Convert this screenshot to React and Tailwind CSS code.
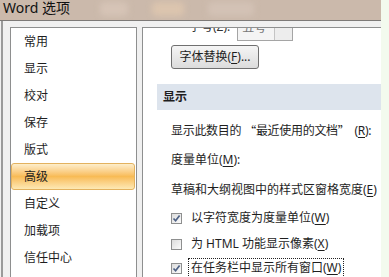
import React from 'react';

const font = { fontFamily: '"Noto Sans", "Noto Sans CJK SC", sans-serif' };
const cjk = { fontFamily: '"Noto Sans CJK SC", sans-serif' };

function Check({ checked }) {
  return (
    <span className="w-[11px] h-[11px] border border-[#8e8f8f] bg-gradient-to-br from-[#dcdcdc] to-[#fbfbfb] flex items-center justify-center shrink-0">
      {checked && (
        <svg width="9" height="9" viewBox="0 0 9 9">
          <path d="M1.5 4.5 L3.6 6.8 L7.6 1.6" fill="none" stroke="#4d6185" strokeWidth="1.7" />
        </svg>
      )}
    </span>
  );
}

function U({ children }) {
  return <span className="underline underline-offset-2">{children}</span>;
}

const navItems = ['常用', '显示', '校对', '保存', '版式', '高级', '自定义', '加载项', '信任中心'];

export default function App() {
  return (
    <div className="w-[389px] h-[277px] overflow-hidden bg-[#f3faee] flex text-[12px] text-[#1e1e1e]" style={font}>
      <div className="w-[381px] h-full flex flex-col">
        {/* title bar */}
        <div className="h-[20px] relative bg-[#cbb9ab] overflow-hidden shrink-0">
          <span className="absolute left-[100px] top-[2px] w-[28px] h-[14px] rounded bg-[#d6c4b6] blur-[3px]" />
          <span className="absolute left-[152px] top-[2px] w-[32px] h-[14px] rounded bg-[#dcc5ae] blur-[3px]" />
          <span className="absolute left-[208px] top-[2px] w-[46px] h-[14px] rounded bg-[#d3c2b5] blur-[3px]" />
          <span className="relative block pl-[3px] text-[14px] leading-[16px] text-[#111]">Word 选项</span>
        </div>

        {/* body */}
        <div className="flex-1 flex bg-[#f0f0f0] border-t border-[#7d7a78] pl-[1px]">
          <div className="flex-1 flex border-l-2 border-[#9a9a9a] pt-[6px] pl-[7px] pb-[4px] gap-[5px]">
            {/* left nav */}
            <div className="w-[127px] bg-white border border-[#8e8f8f] overflow-hidden">
              {navItems.map((item) =>
                item === '高级' ? (
                  <div
                    key={item}
                    className="h-[27px] mr-[1px] flex items-center pl-[12px] rounded-[3px] border border-[#e3b25f] bg-gradient-to-b from-[#fdeecb] via-[#f8bb55] to-[#fde9b4]"
                  >
                    {item}
                  </div>
                ) : (
                  <div key={item} className="h-[27px] flex items-center pl-[13px]">
                    {item}
                  </div>
                )
              )}
            </div>

            {/* right content */}
            <div className="flex-1 bg-white border border-[#8e8f8f] border-r-0 overflow-hidden flex flex-col">
              <div className="h-[20px] -mt-[7px] flex items-start shrink-0">
                <span className="ml-[46px] leading-[12px] text-[#333]">字号(Z):</span>
                <div className="ml-[7px] flex h-[20px] border border-[#a5a5a5]">
                  <span className="w-[36px] bg-[#f4f4f4] px-[4px] leading-[12px] text-[#777]">五号</span>
                  <span className="w-[18px] border-l border-[#c4c4c4] bg-[#ededed]" />
                </div>
              </div>

              <div className="mt-[4px] ml-[28px] shrink-0">
                <button className="w-[88px] h-[24px] rounded-[3px] border border-[#707070] bg-gradient-to-b from-[#f5f5f5] to-[#dcdcdc] flex items-center justify-center">
                  字体替换(<U>F</U>)...
                </button>
              </div>

              <div className="mt-[15px] ml-[14px] h-[26px] bg-[#dde4ed] flex items-center pl-[6px] font-bold shrink-0">
                显示
              </div>

              <div className="mt-[7px] h-[28px] flex items-center pl-[28px] shrink-0 whitespace-nowrap tracking-[-0.3px]">
                显示此数目的<span className="pl-[3px]" style={cjk}>“</span>最近使用的文档<span className="pr-[5px]" style={cjk}>”</span>(<U>R</U>):
              </div>
              <div className="h-[30px] flex items-center pl-[28px] shrink-0">
                度量单位(<U>M</U>):
              </div>
              <div className="h-[30px] flex items-center pl-[28px] shrink-0 whitespace-nowrap">
                草稿和大纲视图中的样式区窗格宽度(<U>E</U>)
              </div>

              <div className="h-[26px] flex items-center pl-[28px] gap-[9px] shrink-0">
                <Check checked />
                <span>以字符宽度为度量单位(<U>W</U>)</span>
              </div>
              <div className="h-[26px] flex items-center pl-[28px] gap-[9px] shrink-0">
                <Check />
                <span>为 HTML 功能显示像素(<U>X</U>)</span>
              </div>
              <div className="h-[22px] flex items-center pl-[28px] gap-[6px] shrink-0">
                <Check checked />
                <span className="border border-dotted border-[#222] px-[2px] leading-[18px]">
                  在任务栏中显示所有窗口(<U>W</U>)
                </span>
              </div>
            </div>
          </div>
        </div>
      </div>
    </div>
  );
}
